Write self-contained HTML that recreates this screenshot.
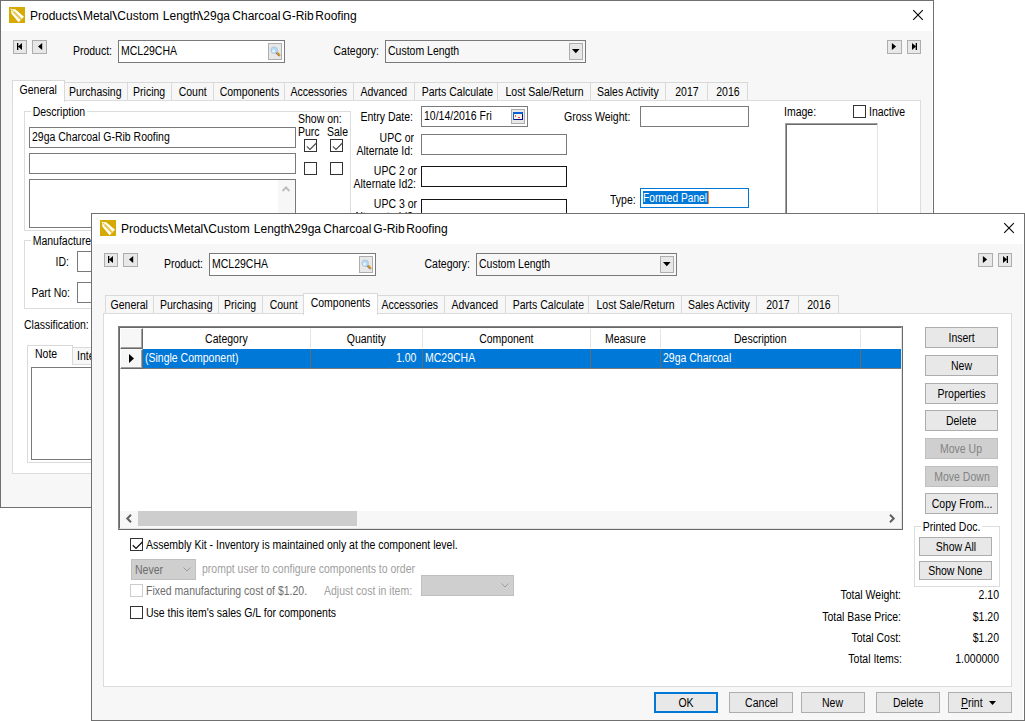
<!DOCTYPE html>
<html>
<head>
<meta charset="utf-8">
<title>Products</title>
<style>
html,body{margin:0;padding:0;}
body{width:1025px;height:721px;background:#fff;overflow:hidden;position:relative;
 font-family:"Liberation Sans",sans-serif;font-size:12.5px;color:#000;}
.win{position:absolute;width:932px;height:506px;border:1px solid #707070;background:#f7f7f7;overflow:hidden;}
.win *{position:absolute;box-sizing:border-box;white-space:nowrap;}
.tbar{left:0;top:0;width:932px;height:30px;background:#fff;}
.rstrip{left:931px;top:0;width:1px;height:506px;background:#fff;}
.title{left:0;top:0;height:30px;line-height:30px;font-size:12px;letter-spacing:0;}
.title span{top:0;white-space:pre;}
.title .bs{transform:scaleX(1.5);transform-origin:50% 50%;}
.t{height:14px;line-height:16px;transform:scaleX(.84);transform-origin:0 50%;}
.win .x{position:static;display:inline-block;transform:scaleX(.84);transform-origin:50% 50%;}
.dc .x{transform-origin:0 50%;}
.dc.r .x{transform-origin:100% 50%;}
.t.r{text-align:right;transform-origin:100% 50%;}
.r{text-align:right;}
.c{text-align:center;}
.nav{width:14px;height:14px;background:#e8e8e8;border:1px solid #adadad;top:39px;}
.in{background:#fff;border:1px solid #7a7a7a;}
.in .t{left:2px;}
.tab{top:81px;height:19px;background:#f7f7f7;border:1px solid #d9d9d9;border-bottom:none;line-height:18px;text-align:center;}
.tab.sel{top:79px;height:22px;background:#fff;line-height:18px;z-index:3;}
.page{left:11px;top:99px;width:909px;height:374px;background:#fff;border:1px solid #dcdcdc;}
.gb{border:1px solid #dcdcdc;}
.gbl{background:#fff;padding:0 2px;height:14px;line-height:14px;transform:scaleX(.84);transform-origin:0 50%;}
.cb{width:13px;height:13px;background:#fff;border:1px solid #333;}
.cb.dis{border-color:#ccc;}
.btn{background:#e8e8e8;border:1px solid #adadad;text-align:center;height:21px;line-height:19px;padding-top:1px;}
.btn.dis{background:#cfcfcf;border-color:#bfbfbf;color:#838383;}
.gray{color:#6d6d6d;}
.lgray{color:#a0a0a0;}
svg{overflow:visible;}
.abs{left:0;top:0;width:0;height:0;}
.ls{letter-spacing:-0.23px;}
.hc{top:329px;height:19px;line-height:21px;text-align:center;border-right:1px solid #e5e5e5;}
.dc{top:349px;height:19px;line-height:19px;color:#fff;border-right:1px solid #696969;}
.rh{background:#f7f7f7;border-top:1px solid #fff;border-left:1px solid #fff;}

</style>
</head>
<body>

<!-- ================= BACK WINDOW ================= -->
<div class="win" id="w1" style="left:0;top:0;">
 <div class="tbar"></div><div class="rstrip"></div>
 <svg style="left:8px;top:6px" width="16" height="16" viewBox="0 0 16 16"><rect width="16" height="16" fill="#d5ab03"/><path d="M1.2 1.4 L3.2 2.3 L6.2 2.3 L15 9.8 L9.6 15.2 L2.3 6.4 L2.3 3.2 Z" fill="#fff"/><path d="M4.4 4.6 L12.2 12.6" stroke="#e8c94f" stroke-width="2.2" fill="none"/><circle cx="3.5" cy="3.6" r="0.8" fill="#e8c94f"/></svg>
 <div class="title"><span style="left:29px">Products</span><span class="bs" style="left:76.8px">\</span><span style="left:81.9px">Metal</span><span class="bs" style="left:112.1px">\</span><span style="left:116.3px">Custom </span><span style="left:161.8px">Length</span><span class="bs" style="left:197.9px">\</span><span style="left:202.3px">29ga </span><span style="left:231.3px">Charcoal </span><span style="left:281.3px">G-Rib </span><span style="left:314.3px">Roofing</span></div>
 <svg style="left:912px;top:9px" width="10" height="10" viewBox="0 0 10 10"><path d="M0.2 0.2 L9.8 9.8 M9.8 0.2 L0.2 9.8" stroke="#000" stroke-width="1.1" fill="none"/></svg>

 <div class="nav" style="left:12px"><svg style="left:0;top:0" width="12" height="12" viewBox="0 0 12 12"><path d="M3 2 h1.3 v7 h-1.3 z M8 2 v7 l-4 -3.5 z" fill="#000"/></svg></div>
 <div class="nav" style="left:31px;width:15px"><svg style="left:0;top:0" width="13" height="12" viewBox="0 0 13 12"><path d="M9.2 2 v7 l-4.2 -3.5 z" fill="#000"/></svg></div>
 <div class="nav" style="left:886px;width:15px"><svg style="left:0;top:0" width="13" height="12" viewBox="0 0 13 12"><path d="M3.9 2 v7 l4.2 -3.5 z" fill="#000"/></svg></div>
 <div class="nav" style="left:906px"><svg style="left:0;top:0" width="12" height="12" viewBox="0 0 12 12"><path d="M7.7 2 h1.3 v7 h-1.3 z M4 2 v7 l4 -3.5 z" fill="#000"/></svg></div>

 <div class="t r" style="left:50px;width:61px;top:42px">Product:</div>
 <div class="in" style="left:117px;top:39px;width:167px;height:23px"><div class="t" style="top:2px">MCL29CHA</div>
  <div style="left:149px;top:2px;width:14px;height:17px;background:#e8e8e8;border:1px solid #adadad"><svg style="left:1px;top:2px" width="11" height="11" viewBox="0 0 11 11"><path d="M6.6 6.6 L9.2 9.2" stroke="#5a5f8a" stroke-width="2.2" stroke-linecap="round"/><path d="M7.4 7 L9.4 9" stroke="#dc9a1e" stroke-width="1.8" stroke-linecap="round"/><circle cx="4.2" cy="4.2" r="3.3" fill="#b3daf8" stroke="#a9b9cf" stroke-width="0.7"/><circle cx="3.6" cy="5" r="1.6" fill="#e4f3fd"/></svg></div>
 </div>
 <div class="t r" style="left:320px;width:58px;top:42px">Category:</div>
 <div class="in" style="left:384px;top:39px;width:201px;height:23px;background:#f7f7f7"><div class="t" style="top:2px">Custom Length</div>
  <div style="left:183px;top:2px;width:14px;height:17px;background:#e8e8e8;border:1px solid #adadad"><svg style="left:2px;top:5px" width="8" height="4" viewBox="0 0 8 4"><path d="M0 0 h7.6 l-3.8 4.2 z" fill="#000"/></svg></div>
 </div>

 <div class="tab sel" style="left:11px;width:53px"><span class="x">General</span></div>
 <div class="tab" style="left:61px;width:66px"><span class="x">Purchasing</span></div>
 <div class="tab" style="left:126px;width:45px"><span class="x">Pricing</span></div>
 <div class="tab" style="left:170px;width:43px"><span class="x">Count</span></div>
 <div class="tab" style="left:212px;width:72px"><span class="x">Components</span></div>
 <div class="tab" style="left:283px;width:70px"><span class="x">Accessories</span></div>
 <div class="tab" style="left:352px;width:62px"><span class="x">Advanced</span></div>
 <div class="tab" style="left:413px;width:84px"><span class="x">Parts Calculate</span></div>
 <div class="tab" style="left:496px;width:94px"><span class="x">Lost Sale/Return</span></div>
 <div class="tab" style="left:589px;width:76px"><span class="x">Sales Activity</span></div>
 <div class="tab" style="left:664px;width:43px"><span class="x">2017</span></div>
 <div class="tab" style="left:706px;width:41px"><span class="x">2016</span></div>

 <div class="page" id="p1"></div>
 <div class="abs" style="left:-1px;top:-1px">
  <!-- Description group -->
  <div class="gb" style="left:24px;top:111px;width:327px;height:120px"></div>
  <div class="gbl" style="left:31px;top:105px">Description</div>
  <div class="in" style="left:29px;top:127px;width:267px;height:21px"><div class="t" style="top:1px">29ga Charcoal G-Rib Roofing</div></div>
  <div class="in" style="left:29px;top:153px;width:267px;height:21px"></div>
  <div class="in" style="left:29px;top:179px;width:267px;height:49px">
    <div style="left:248px;top:0;width:17px;height:47px;background:#f7f7f7"></div>
    <svg style="left:252px;top:6px" width="8" height="6" viewBox="0 0 8 6"><path d="M0.6 5 L4 1.4 L7.4 5" stroke="#bcbcbc" stroke-width="1.9" fill="none"/></svg>
  </div>
  <div class="t" style="left:298px;top:111px">Show on:</div>
  <div class="t" style="left:298px;top:124px">Purc</div>
  <div class="t" style="left:327px;top:124px">Sale</div>
  <div class="cb" style="left:304px;top:139px"><svg style="left:1px;top:1px" width="11" height="11" viewBox="0 0 11 11"><path d="M0.8 5.3 L4 8.4 L10.4 2" stroke="#4a4a4a" stroke-width="1.1" fill="none"/></svg></div>
  <div class="cb" style="left:330px;top:139px"><svg style="left:1px;top:1px" width="11" height="11" viewBox="0 0 11 11"><path d="M0.8 5.3 L4 8.4 L10.4 2" stroke="#4a4a4a" stroke-width="1.1" fill="none"/></svg></div>
  <div class="cb" style="left:304px;top:162px"></div>
  <div class="cb" style="left:330px;top:162px"></div>

  <div class="t r" style="left:340px;width:73px;top:109px">Entry Date:</div>
  <div class="in" style="left:421px;top:106px;width:107px;height:21px"><div class="t" style="top:1px">10/14/2016 Fri</div>
    <div style="left:89px;top:2px;width:14px;height:15px;background:#e8e8e8;border:1px solid #adadad"><svg style="left:1px;top:2px" width="10" height="8" viewBox="0 0 10 8"><rect x="0" y="0" width="10" height="8" fill="#0c0c84"/><path d="M0 0 H9.3 L10 0.7 V2 H1 V8 H0 Z" fill="#0b60d8"/><rect x="1" y="2" width="8" height="5" fill="#f6f3e6"/><rect x="2" y="3" width="1" height="2" fill="#f06060"/><rect x="5" y="5" width="2" height="1" fill="#e84040"/></svg></div>
  </div>
  <div class="t r" style="left:340px;width:74px;top:130px">UPC or</div>
  <div class="t r" style="left:340px;width:73px;top:143px">Alternate Id:</div>
  <div class="in" style="left:421px;top:134px;width:146px;height:21px"></div>
  <div class="t r" style="left:340px;width:77px;top:163px">UPC 2 or</div>
  <div class="t r" style="left:340px;width:76px;top:176px">Alternate Id2:</div>
  <div class="in" style="left:421px;top:166px;width:146px;height:21px;border-color:#141414"></div>
  <div class="t r" style="left:340px;width:77px;top:196px">UPC 3 or</div>
  <div class="t r" style="left:340px;width:76px;top:209px">Alternate Id3:</div>
  <div class="in" style="left:421px;top:199px;width:146px;height:21px;border-color:#141414"></div>

  <div class="t" style="left:564px;top:109px">Gross Weight:</div>
  <div class="in" style="left:640px;top:106px;width:109px;height:21px"></div>
  <div class="t" style="left:610px;top:192px">Type:</div>
  <div class="in" style="left:640px;top:188px;width:109px;height:20px;border-color:#0078d7"><div style="left:2px;top:2px;height:13px;width:65px;line-height:14px;background:#0078d7;color:#fff;padding:0"><span class="x" style="transform-origin:0 50%;transform:scaleX(.815)">Formed Panel</span></div><div style="left:67px;top:2px;width:1px;height:13px;background:#ff8728"></div></div>

  <div class="t" style="left:784px;top:104px">Image:</div>
  <div style="left:785px;top:123px;width:93px;height:120px;background:#fff;border:1px solid #a0a0a0;border-right-color:#e3e3e3"><div style="left:0;top:0;width:91px;height:119px;border-left:1px solid #696969;border-top:1px solid #696969"></div></div>
  <div class="cb" style="left:853px;top:105px"></div>
  <div class="t" style="left:869px;top:104px">Inactive</div>

  <!-- Manufacturer group -->
  <div class="gb" style="left:24px;top:240px;width:327px;height:69px"></div>
  <div class="gbl" style="left:31px;top:234px">Manufacturer</div>
  <div class="t r" style="left:30px;width:39px;top:254px">ID:</div>
  <div class="in" style="left:77px;top:251px;width:100px;height:21px"></div>
  <div class="t r" style="left:24px;width:46px;top:285px">Part No:</div>
  <div class="in" style="left:77px;top:282px;width:100px;height:21px"></div>
  <div class="t" style="left:24px;top:317px">Classification:</div>

  <div class="tab" style="left:72px;top:347px;width:60px;height:18px;text-align:left;padding-left:4px;line-height:17px"><span class="x" style="transform-origin:0 50%">Internal</span></div>
  <div style="left:27px;top:364px;width:300px;height:99px;background:#fff;border:1px solid #dcdcdc"></div>
  <div class="tab sel" style="left:27px;top:345px;width:46px;height:20px;line-height:16px;text-align:left;padding-left:7px"><span class="x" style="transform-origin:0 50%">Note</span></div>
  <div class="in" style="left:31px;top:367px;width:290px;height:93px"></div>
 </div>

</div>

<!-- ================= FRONT WINDOW ================= -->
<div class="win" id="w2" style="left:91px;top:213px;">
 <div class="tbar"></div><div class="rstrip"></div>
 <svg style="left:8px;top:6px" width="16" height="16" viewBox="0 0 16 16"><rect width="16" height="16" fill="#d5ab03"/><path d="M1.2 1.4 L3.2 2.3 L6.2 2.3 L15 9.8 L9.6 15.2 L2.3 6.4 L2.3 3.2 Z" fill="#fff"/><path d="M4.4 4.6 L12.2 12.6" stroke="#e8c94f" stroke-width="2.2" fill="none"/><circle cx="3.5" cy="3.6" r="0.8" fill="#e8c94f"/></svg>
 <div class="title"><span style="left:29px">Products</span><span class="bs" style="left:76.8px">\</span><span style="left:81.9px">Metal</span><span class="bs" style="left:112.1px">\</span><span style="left:116.3px">Custom </span><span style="left:161.8px">Length</span><span class="bs" style="left:197.9px">\</span><span style="left:202.3px">29ga </span><span style="left:231.3px">Charcoal </span><span style="left:281.3px">G-Rib </span><span style="left:314.3px">Roofing</span></div>
 <svg style="left:912px;top:9px" width="10" height="10" viewBox="0 0 10 10"><path d="M0.2 0.2 L9.8 9.8 M9.8 0.2 L0.2 9.8" stroke="#000" stroke-width="1.1" fill="none"/></svg>

 <div class="nav" style="left:12px"><svg style="left:0;top:0" width="12" height="12" viewBox="0 0 12 12"><path d="M3 2 h1.3 v7 h-1.3 z M8 2 v7 l-4 -3.5 z" fill="#000"/></svg></div>
 <div class="nav" style="left:31px;width:15px"><svg style="left:0;top:0" width="13" height="12" viewBox="0 0 13 12"><path d="M9.2 2 v7 l-4.2 -3.5 z" fill="#000"/></svg></div>
 <div class="nav" style="left:886px;width:15px"><svg style="left:0;top:0" width="13" height="12" viewBox="0 0 13 12"><path d="M3.9 2 v7 l4.2 -3.5 z" fill="#000"/></svg></div>
 <div class="nav" style="left:906px"><svg style="left:0;top:0" width="12" height="12" viewBox="0 0 12 12"><path d="M7.7 2 h1.3 v7 h-1.3 z M4 2 v7 l4 -3.5 z" fill="#000"/></svg></div>

 <div class="t r" style="left:50px;width:61px;top:42px">Product:</div>
 <div class="in" style="left:117px;top:39px;width:167px;height:23px"><div class="t" style="top:2px">MCL29CHA</div>
  <div style="left:149px;top:2px;width:14px;height:17px;background:#e8e8e8;border:1px solid #adadad"><svg style="left:1px;top:2px" width="11" height="11" viewBox="0 0 11 11"><path d="M6.6 6.6 L9.2 9.2" stroke="#5a5f8a" stroke-width="2.2" stroke-linecap="round"/><path d="M7.4 7 L9.4 9" stroke="#dc9a1e" stroke-width="1.8" stroke-linecap="round"/><circle cx="4.2" cy="4.2" r="3.3" fill="#b3daf8" stroke="#a9b9cf" stroke-width="0.7"/><circle cx="3.6" cy="5" r="1.6" fill="#e4f3fd"/></svg></div>
 </div>
 <div class="t r" style="left:320px;width:58px;top:42px">Category:</div>
 <div class="in" style="left:384px;top:39px;width:201px;height:23px;background:#f7f7f7"><div class="t" style="top:2px">Custom Length</div>
  <div style="left:183px;top:2px;width:14px;height:17px;background:#e8e8e8;border:1px solid #adadad"><svg style="left:2px;top:5px" width="8" height="4" viewBox="0 0 8 4"><path d="M0 0 h7.6 l-3.8 4.2 z" fill="#000"/></svg></div>
 </div>

 <div class="tab" style="left:13px;width:49px"><span class="x">General</span></div>
 <div class="tab" style="left:61px;width:66px"><span class="x">Purchasing</span></div>
 <div class="tab" style="left:126px;width:45px"><span class="x">Pricing</span></div>
 <div class="tab" style="left:170px;width:43px"><span class="x">Count</span></div>
 <div class="tab sel" style="left:211px;width:75px"><span class="x">Components</span></div>
 <div class="tab" style="left:283px;width:70px"><span class="x">Accessories</span></div>
 <div class="tab" style="left:352px;width:62px"><span class="x">Advanced</span></div>
 <div class="tab" style="left:413px;width:84px"><span class="x">Parts Calculate</span></div>
 <div class="tab" style="left:496px;width:94px"><span class="x">Lost Sale/Return</span></div>
 <div class="tab" style="left:589px;width:76px"><span class="x">Sales Activity</span></div>
 <div class="tab" style="left:664px;width:43px"><span class="x">2017</span></div>
 <div class="tab" style="left:706px;width:41px"><span class="x">2016</span></div>

 <div class="page" id="p2"></div>
 <div class="abs" style="left:-92px;top:-214px">
  <!-- grid -->
  <div style="left:118px;top:326px;width:785px;height:204px;background:#fff;border:1px solid #828282;border-right-color:#696969;border-bottom-color:#696969">
    <div style="left:0;top:0;width:783px;height:202px;border:1px solid #696969;border-right-color:#e3e3e3;border-bottom-color:#e3e3e3"></div>
  </div>
  <div class="rh" style="left:120px;top:328px;width:23px;height:21px;border-right:1px solid #696969;border-bottom:1px solid #696969"><div style="left:0;top:0;width:21px;height:19px;border-right:1px solid #a0a0a0;border-bottom:1px solid #a0a0a0"></div></div>
  <div class="rh" style="left:120px;top:349px;width:23px;height:20px;border-top-color:#f7f7f7;border-right:1px solid #696969;border-bottom:1px solid #696969"><div style="left:0;top:0;width:21px;height:18px;border-right:1px solid #a0a0a0;border-bottom:1px solid #a0a0a0"></div>
    <svg style="left:8px;top:4px" width="5" height="9" viewBox="0 0 5 9"><path d="M0 0 L5 4.5 L0 9 Z" fill="#000"/></svg></div>
  <div class="hc" style="left:143px;width:168px"><span class="x">Category</span></div>
  <div class="hc" style="left:311px;width:112px"><span class="x">Quantity</span></div>
  <div class="hc" style="left:423px;width:168px"><span class="x">Component</span></div>
  <div class="hc" style="left:591px;width:70px"><span class="x">Measure</span></div>
  <div class="hc" style="left:661px;width:200px"><span class="x">Description</span></div>
  <div style="left:143px;top:349px;width:758px;height:19px;background:#0078d7"></div>
  <div style="left:143px;top:368px;width:758px;height:1px;background:#7a7a7a"></div>
  <div class="dc" style="left:143px;width:168px;padding-left:2px"><span class="x">(Single Component)</span></div>
  <div class="dc r" style="left:311px;width:112px;padding-right:6px"><span class="x">1.00</span></div>
  <div class="dc" style="left:423px;width:168px;padding-left:2px"><span class="x">MC29CHA</span></div>
  <div class="dc" style="left:591px;width:70px"></div>
  <div class="dc" style="left:661px;width:200px;padding-left:2px"><span class="x">29ga Charcoal</span></div>
  <!-- h scrollbar -->
  <div style="left:120px;top:511px;width:781px;height:17px;background:#f7f7f7"></div>
  <div style="left:138px;top:511px;width:219px;height:15px;background:#cdcdcd"></div>
  <svg style="left:126px;top:514px" width="6" height="9" viewBox="0 0 6 9"><path d="M5 0.8 L1.3 4.5 L5 8.2" stroke="#606060" stroke-width="2" fill="none"/></svg>
  <svg style="left:889px;top:514px" width="6" height="9" viewBox="0 0 6 9"><path d="M1 0.8 L4.7 4.5 L1 8.2" stroke="#606060" stroke-width="2" fill="none"/></svg>

  <!-- right buttons -->
  <div class="btn " style="left:925px;top:327px;width:73px;height:21px;line-height:19px"><span class="x">Insert</span></div>
<div class="btn " style="left:925px;top:355px;width:73px;height:21px;line-height:19px"><span class="x">New</span></div>
<div class="btn " style="left:925px;top:383px;width:73px;height:21px;line-height:19px"><span class="x">Properties</span></div>
<div class="btn " style="left:925px;top:410px;width:73px;height:21px;line-height:19px"><span class="x">Delete</span></div>
<div class="btn dis" style="left:925px;top:438px;width:73px;height:21px;line-height:19px"><span class="x">Move Up</span></div>
<div class="btn dis" style="left:925px;top:466px;width:73px;height:21px;line-height:19px"><span class="x">Move Down</span></div>
<div class="btn " style="left:925px;top:493px;width:73px;height:21px;line-height:19px"><span class="x">Copy From...</span></div>

  <div class="gb" style="left:914px;top:526px;width:86px;height:61px"></div>
  <div class="gbl" style="left:921px;top:520px">Printed Doc.</div>
  <div class="btn " style="left:919px;top:537px;width:73px;height:19px;line-height:17px"><span class="x">Show All</span></div>
<div class="btn " style="left:919px;top:561px;width:73px;height:19px;line-height:17px"><span class="x">Show None</span></div>


  <div class="t r" style="left:780px;width:121px;top:587px">Total Weight:</div>
  <div class="t r" style="left:780px;width:121px;top:609px">Total Base Price:</div>
  <div class="t r" style="left:780px;width:121px;top:630px">Total Cost:</div>
  <div class="t r" style="left:780px;width:122px;top:651px">Total Items:</div>
  <div class="t r" style="left:900px;width:99px;top:587px">2.10</div>
  <div class="t r" style="left:900px;width:99px;top:609px">$1.20</div>
  <div class="t r" style="left:900px;width:99px;top:630px">$1.20</div>
  <div class="t r" style="left:900px;width:99px;top:651px">1.000000</div>

  <!-- options -->
  <div class="cb" style="left:130px;top:538px"><svg style="left:1px;top:1px" width="11" height="11" viewBox="0 0 11 11"><path d="M0.8 5.3 L4 8.4 L10.4 2" stroke="#111" stroke-width="1.3" fill="none"/></svg></div>
  <div class="t" style="left:146px;top:537px">Assembly Kit - Inventory is maintained only at the component level.</div>
  <div style="left:131px;top:559px;width:65px;height:21px;background:#cfcfcf;border:1px solid #bfbfbf"><div class="t gray" style="left:3px;top:2px">Never</div><svg style="left:51px;top:7px" width="8" height="5" viewBox="0 0 8 5"><path d="M0.5 0.5 L4 4 L7.5 0.5" stroke="#9a9a9a" stroke-width="1" fill="none"/></svg></div>
  <div class="t lgray" style="left:202px;top:561px">prompt user to configure components to order</div>
  <div class="cb dis" style="left:130px;top:584px"></div>
  <div class="t gray" style="left:146px;top:583px">Fixed manufacturing cost of $1.20.</div>
  <div class="t lgray" style="left:324px;top:583px">Adjust cost in item:</div>
  <div style="left:421px;top:575px;width:93px;height:21px;background:#cfcfcf;border:1px solid #bfbfbf"><svg style="left:79px;top:7px" width="8" height="5" viewBox="0 0 8 5"><path d="M0.5 0.5 L4 4 L7.5 0.5" stroke="#9a9a9a" stroke-width="1" fill="none"/></svg></div>
  <div class="cb" style="left:130px;top:606px"></div>
  <div class="t" style="left:146px;top:605px">Use this item's sales G/L for components</div>

  <!-- bottom buttons -->
  <div class="btn" style="left:654px;top:692px;width:64px;border:2px solid #0078d7;line-height:17px"><span class="x">OK</span></div>
  <div class="btn " style="left:729px;top:692px;width:64px;height:21px;line-height:19px"><span class="x">Cancel</span></div>
<div class="btn " style="left:801px;top:692px;width:64px;height:21px;line-height:19px"><span class="x">New</span></div>
<div class="btn " style="left:876px;top:692px;width:64px;height:21px;line-height:19px"><span class="x">Delete</span></div>

  <div class="btn" style="left:948px;top:692px;width:64px;text-align:left;padding-left:12px"><span class="x" style="transform-origin:0 50%"><span style="position:static;text-decoration:underline">P</span>rint</span><svg style="left:40px;top:8px" width="7" height="4" viewBox="0 0 7 4"><path d="M0 0 h7 l-3.5 4 z" fill="#000"/></svg></div>
 </div>

</div>

</body>
</html>
